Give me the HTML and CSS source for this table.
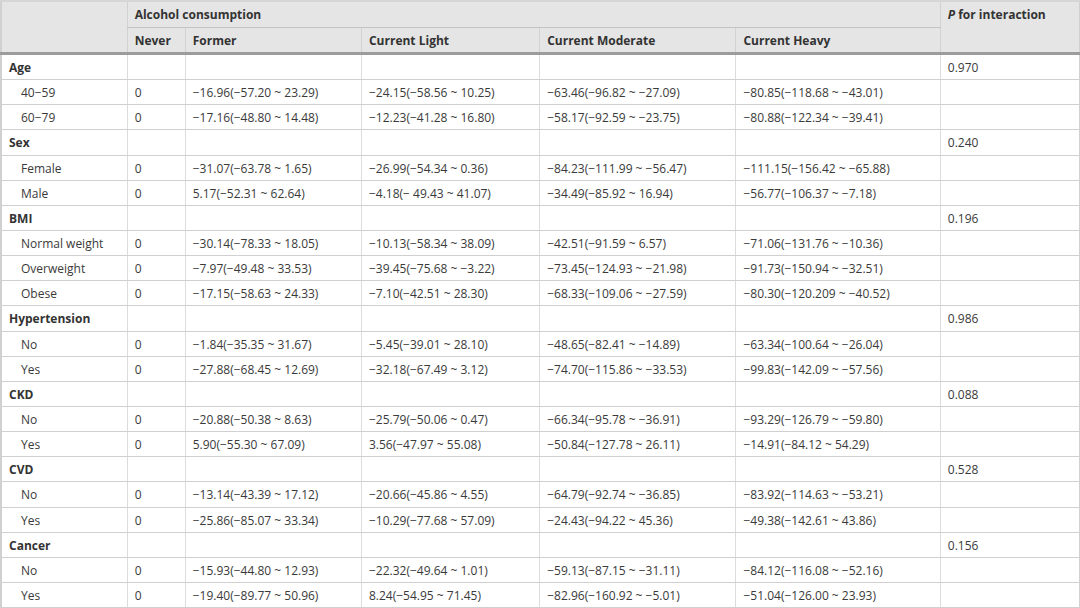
FILE: index.html
```html
<!DOCTYPE html>
<html>
<head>
<meta charset="utf-8">
<link rel="stylesheet" href="styles.css">
</head>
<body>
<table class="tbl">
<colgroup>
<col class="c0"><col class="c1"><col class="c2"><col class="c3"><col class="c4"><col class="c5"><col class="c6">
</colgroup>
<thead>
<tr class="h1">
<th rowspan="2"></th>
<th colspan="5" class="grp">Alcohol consumption</th>
<th rowspan="2" class="pcol"><i>P</i> for interaction</th>
</tr>
<tr class="h2">
<th>Never</th><th>Former</th><th>Current Light</th><th>Current Moderate</th><th>Current Heavy</th>
</tr>
</thead>
<tbody>
<tr class="cat"><td>Age</td><td></td><td></td><td></td><td></td><td></td><td>0.970</td></tr>
<tr><td class="sub">40−59</td><td>0</td><td>−16.96(−57.20 ~ 23.29)</td><td>−24.15(−58.56 ~ 10.25)</td><td>−63.46(−96.82 ~ −27.09)</td><td>−80.85(−118.68 ~ −43.01)</td><td></td></tr>
<tr><td class="sub">60−79</td><td>0</td><td>−17.16(−48.80 ~ 14.48)</td><td>−12.23(−41.28 ~ 16.80)</td><td>−58.17(−92.59 ~ −23.75)</td><td>−80.88(−122.34 ~ −39.41)</td><td></td></tr>
<tr class="cat"><td>Sex</td><td></td><td></td><td></td><td></td><td></td><td>0.240</td></tr>
<tr><td class="sub">Female</td><td>0</td><td>−31.07(−63.78 ~ 1.65)</td><td>−26.99(−54.34 ~ 0.36)</td><td>−84.23(−111.99 ~ −56.47)</td><td>−111.15(−156.42 ~ −65.88)</td><td></td></tr>
<tr><td class="sub">Male</td><td>0</td><td>5.17(−52.31 ~ 62.64)</td><td>−4.18(− 49.43 ~ 41.07)</td><td>−34.49(−85.92 ~ 16.94)</td><td>−56.77(−106.37 ~ −7.18)</td><td></td></tr>
<tr class="cat"><td>BMI</td><td></td><td></td><td></td><td></td><td></td><td>0.196</td></tr>
<tr><td class="sub">Normal weight</td><td>0</td><td>−30.14(−78.33 ~ 18.05)</td><td>−10.13(−58.34 ~ 38.09)</td><td>−42.51(−91.59 ~ 6.57)</td><td>−71.06(−131.76 ~ −10.36)</td><td></td></tr>
<tr><td class="sub">Overweight</td><td>0</td><td>−7.97(−49.48 ~ 33.53)</td><td>−39.45(−75.68 ~ −3.22)</td><td>−73.45(−124.93 ~ −21.98)</td><td>−91.73(−150.94 ~ −32.51)</td><td></td></tr>
<tr><td class="sub">Obese</td><td>0</td><td>−17.15(−58.63 ~ 24.33)</td><td>−7.10(−42.51 ~ 28.30)</td><td>−68.33(−109.06 ~ −27.59)</td><td>−80.30(−120.209 ~ −40.52)</td><td></td></tr>
<tr class="cat"><td>Hypertension</td><td></td><td></td><td></td><td></td><td></td><td>0.986</td></tr>
<tr><td class="sub">No</td><td>0</td><td>−1.84(−35.35 ~ 31.67)</td><td>−5.45(−39.01 ~ 28.10)</td><td>−48.65(−82.41 ~ −14.89)</td><td>−63.34(−100.64 ~ −26.04)</td><td></td></tr>
<tr><td class="sub">Yes</td><td>0</td><td>−27.88(−68.45 ~ 12.69)</td><td>−32.18(−67.49 ~ 3.12)</td><td>−74.70(−115.86 ~ −33.53)</td><td>−99.83(−142.09 ~ −57.56)</td><td></td></tr>
<tr class="cat"><td>CKD</td><td></td><td></td><td></td><td></td><td></td><td>0.088</td></tr>
<tr><td class="sub">No</td><td>0</td><td>−20.88(−50.38 ~ 8.63)</td><td>−25.79(−50.06 ~ 0.47)</td><td>−66.34(−95.78 ~ −36.91)</td><td>−93.29(−126.79 ~ −59.80)</td><td></td></tr>
<tr><td class="sub">Yes</td><td>0</td><td>5.90(−55.30 ~ 67.09)</td><td>3.56(−47.97 ~ 55.08)</td><td>−50.84(−127.78 ~ 26.11)</td><td>−14.91(−84.12 ~ 54.29)</td><td></td></tr>
<tr class="cat"><td>CVD</td><td></td><td></td><td></td><td></td><td></td><td>0.528</td></tr>
<tr><td class="sub">No</td><td>0</td><td>−13.14(−43.39 ~ 17.12)</td><td>−20.66(−45.86 ~ 4.55)</td><td>−64.79(−92.74 ~ −36.85)</td><td>−83.92(−114.63 ~ −53.21)</td><td></td></tr>
<tr><td class="sub">Yes</td><td>0</td><td>−25.86(−85.07 ~ 33.34)</td><td>−10.29(−77.68 ~ 57.09)</td><td>−24.43(−94.22 ~ 45.36)</td><td>−49.38(−142.61 ~ 43.86)</td><td></td></tr>
<tr class="cat"><td>Cancer</td><td></td><td></td><td></td><td></td><td></td><td>0.156</td></tr>
<tr><td class="sub">No</td><td>0</td><td>−15.93(−44.80 ~ 12.93)</td><td>−22.32(−49.64 ~ 1.01)</td><td>−59.13(−87.15 ~ −31.11)</td><td>−84.12(−116.08 ~ −52.16)</td><td></td></tr>
<tr><td class="sub">Yes</td><td>0</td><td>−19.40(−89.77 ~ 50.96)</td><td>8.24(−54.95 ~ 71.45)</td><td>−82.96(−160.92 ~ −5.01)</td><td>−51.04(−126.00 ~ 23.93)</td><td></td></tr>
</tbody>
</table>
</body>
</html>
```
FILE: styles.css
```css
html, body {
  margin: 0;
  padding: 0;
  background: #ffffff;
}
body {
  font-family: "Open Sans", "Noto Sans", sans-serif;
  font-size: 12px;
  color: #3a3a3a;
  overflow: hidden;
}
.tbl {
  width: 1080px;
  table-layout: fixed;
  border-collapse: collapse;
  border-top: 2px solid #d6d6d6;
  border-left: 2px solid #d0d0d0;
  border-right: 1px solid #d0d0d0;
}
.c0 { width: 126px; }
.c1 { width: 58px; }
.c2 { width: 176px; }
.c3 { width: 178px; }
.c4 { width: 196px; }
.c5 { width: 204px; }
.c6 { width: 139px; }
th {
  background: #e5e5e5;
  font-weight: 700;
  color: #333333;
  text-align: left;
  vertical-align: top;
  padding: 1px 7px 0;
  height: 23px;
  line-height: 23px;
  border-left: 1px solid #d2d2d2;
  border-bottom: 1px solid #c4c4c4;
}
.h1 th {
  height: 24px;
  line-height: 24px;
}
.h1 th:first-child {
  border-left: none;
}
.h2 th {
  border-bottom: 3px solid #9c9c9c;
}
.h1 th[rowspan] {
  border-bottom: 3px solid #9c9c9c;
}
td {
  padding: 1px 7px 0;
  height: 23.15px;
  line-height: 23px;
  border-left: 1px solid #dcdcdc;
  border-bottom: 1px solid #d0d0d0;
  white-space: nowrap;
  overflow: hidden;
}
td:first-child {
  border-left: none;
  padding-left: 7px;
}
.cat td:first-child {
  font-weight: 700;
  color: #333333;
}
td.sub {
  padding-left: 19px;
}
```
